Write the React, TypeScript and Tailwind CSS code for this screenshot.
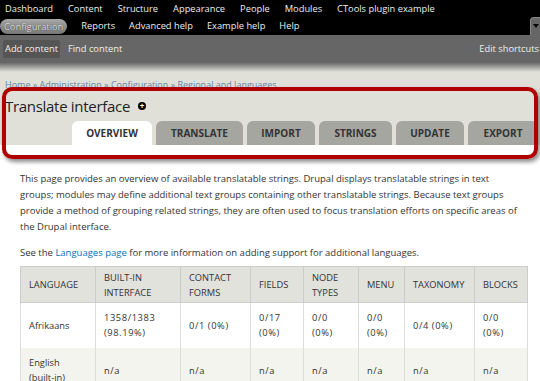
import React from 'react';

const topMenu = ['Dashboard', 'Content', 'Structure', 'Appearance', 'People', 'Modules', 'CTools plugin example'];
const secondMenu = ['Reports', 'Advanced help', 'Example help', 'Help'];
const tabs = ['Overview', 'Translate', 'Import', 'Strings', 'Update', 'Export'];

const columns = [
  { label: ['Language'], w: 'w-[75px]' },
  { label: ['Built-in', 'interface'], w: 'w-[85px]' },
  { label: ['Contact', 'forms'], w: 'w-[70px]' },
  { label: ['Fields'], w: 'w-[53px]' },
  { label: ['Node', 'types'], w: 'w-[55px]' },
  { label: ['Menu'], w: 'w-[46px]' },
  { label: ['Taxonomy'], w: 'w-[70px]' },
  { label: ['Blocks'], w: 'w-[53px]' },
];

const rows = [
  [['Afrikaans'], ['1358/1383', '(98.19%)'], ['0/1 (0%)'], ['0/17', '(0%)'], ['0/0', '(0%)'], ['0/0', '(0%)'], ['0/4 (0%)'], ['0/0', '(0%)']],
  [['English', '(built-in)'], ['n/a'], ['n/a'], ['n/a'], ['n/a'], ['n/a'], ['n/a'], ['n/a']],
];

const tabWidths = ['w-[80px]', 'w-[87px]', 'w-[68px]', 'w-[73px]', 'w-[68px]', 'w-[70px]'];

const App = () => {
  return (
    <div className="relative w-[540px] h-[381px] overflow-hidden bg-white font-['Open_Sans',sans-serif] text-[#333]">
      {/* toolbar */}
      <div className="relative bg-black h-[35px] text-[#eee] text-[9.3px]">
        <div className="flex h-[17px] items-center pl-[5px] gap-[15px]">
          {topMenu.map((m) => (
            <span key={m}>{m}</span>
          ))}
        </div>
        <div className="flex h-[18px] items-center gap-[14px]">
          <span className="rounded-full bg-gradient-to-b from-[#a8a8a8] to-[#777] px-[4px] h-[15px] leading-[15px] text-[#ddd] [text-shadow:0_0_1px_#333]">
            Configuration
          </span>
          {secondMenu.map((m) => (
            <span key={m}>{m}</span>
          ))}
        </div>
        <div className="absolute right-0 top-[17px] w-[10px] h-[18px] bg-[#666] rounded-tl-[4px] border-l border-t border-[#888]">
          <span className="absolute right-[1px] top-[6px] border-x-[3px] border-x-transparent border-t-[4px] border-t-black" />
        </div>
      </div>
      <div className="flex items-center justify-between h-[28px] bg-[#666] pl-[3px] text-[9.3px] text-[#eee]">
        <div className="flex items-center gap-[8px]">
          <span className="bg-[#555] rounded-[2px] px-[2px] h-[18px] leading-[18px]">Add content</span>
          <span>Find content</span>
        </div>
        <span className="whitespace-nowrap pr-[1px]">Edit shortcuts</span>
      </div>
      {/* page header */}
      <div className="bg-gradient-to-b from-[#6e6e6e] to-[#e0e0d8] h-[9px]" />
      <div className="bg-[#e0e0d8] h-[73px] flex flex-col">
        <div className="pl-[5px] pt-[7px] text-[9px] leading-[12px] text-[#6a86a8] whitespace-nowrap">
          Home » Administration » Configuration » Regional and languages
        </div>
        <div className="flex items-center pl-[5px] pt-[4px] h-[25px]">
          <h1 className="text-[15px] leading-[18px] tracking-[-0.3px] text-[#222]">Translate interface</h1>
          <span className="ml-[8px] w-[8px] h-[8px] rounded-full bg-black flex items-center justify-center text-white text-[8px] leading-none font-bold">
            +
          </span>
        </div>
        <div className="mt-auto flex gap-[4px] pl-[72px]">
          {tabs.map((t, i) => (
            <div
              key={t}
              className={`${tabWidths[i]} h-[24px] rounded-t-[6px] flex items-center justify-center text-[10px] font-bold uppercase text-[#333] ${
                i === 0 ? 'bg-white' : 'bg-[#a6a6a0]'
              }`}
            >
              {t}
            </div>
          ))}
        </div>
      </div>
      {/* content */}
      <div className="px-[20px] pt-[26px] text-[9.5px] leading-[16px] text-[#333]">
        <p className="w-[500px]">
          This page provides an overview of available translatable strings. Drupal displays translatable strings in text
          groups; modules may define additional text groups containing other translatable strings. Because text groups
          provide a method of grouping related strings, they are often used to focus translation efforts on specific areas of
          the Drupal interface.
        </p>
        <p className="mt-[10px]">
          See the <span className="text-[#0074bd]">Languages page</span> for more information on adding support for additional
          languages.
        </p>
        <table className="mt-[5px] border-collapse text-[9.3px] leading-[15px] w-[507px] table-fixed">
          <thead>
            <tr className="bg-[#e1e2dc] h-[36px]">
              {columns.map((c) => (
                <th key={c.label.join()} className={`${c.w} border border-[#ccc] text-left font-normal uppercase px-[8px]`}>
                  {c.label.map((l) => (
                    <div key={l}>{l}</div>
                  ))}
                </th>
              ))}
            </tr>
          </thead>
          <tbody>
            {rows.map((r, ri) => (
              <tr key={ri} className={ri === 0 ? 'bg-white h-[45px]' : 'bg-[#f3f4ee] h-[45px]'}>
                {r.map((cell, ci) => (
                  <td key={ci} className="border-x border-[#ddd] px-[8px] tracking-[0.6px]">
                    {cell.map((l) => (
                      <div key={l} className={ci === 0 ? 'tracking-normal' : ''}>{l}</div>
                    ))}
                  </td>
                ))}
              </tr>
            ))}
          </tbody>
        </table>
      </div>
      {/* annotation highlight */}
      <div className="absolute left-[2px] top-[87px] w-[536px] h-[72px] border-[4px] border-[#b00000] rounded-[10px] shadow-[2px_3px_4px_rgba(0,0,0,0.45)]" />
    </div>
  );
};

export default App;
